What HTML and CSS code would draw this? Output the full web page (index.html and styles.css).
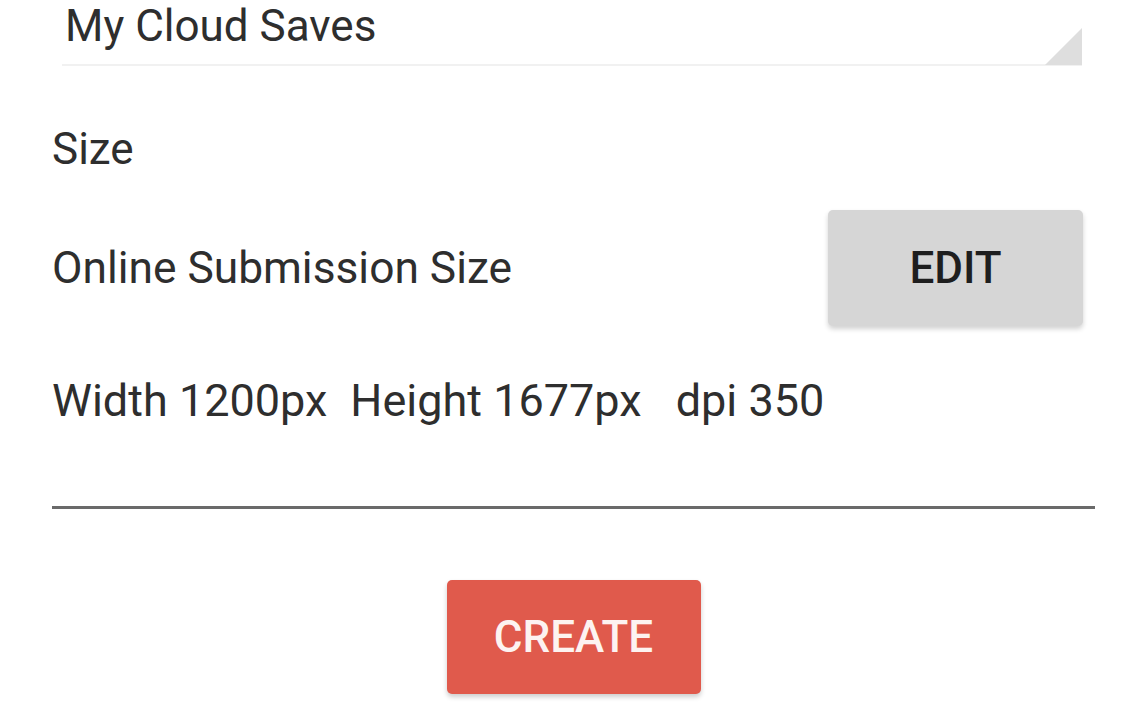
FILE: index.html
```html
<!DOCTYPE html>
<html>
<head>
<meta charset="utf-8">
<link rel="stylesheet" href="styles.css">
</head>
<body>
<div class="page">
  <div class="select">
    <span class="select-text">My Cloud Saves</span>
    <span class="select-arrow"></span>
  </div>
  <div class="label">Size</div>
  <div class="row">
    <span class="row-text">Online Submission Size</span>
    <button class="btn btn-edit">EDIT</button>
  </div>
  <div class="dims"><span class="dim dim-w">Width 1200px</span><span class="dim dim-h">Height 1677px</span><span class="dim">dpi 350</span></div>
  <div class="divider"></div>
  <div class="actions">
    <button class="btn btn-create">CREATE</button>
  </div>
</div>
</body>
</html>
```
FILE: styles.css
```css
html, body {
  margin: 0;
  padding: 0;
  background: #ffffff;
}
body {
  width: 1146px;
  height: 716px;
  overflow: hidden;
  font-family: Roboto, "Noto Sans", sans-serif;
  color: #2e2e2e;
}
.page {
  padding: 0 51px 0 52px;
}
.select {
  position: relative;
  margin: 0 13px 0 10px;
  height: 64px;
  border-bottom: 2px solid #f1f1f1;
  display: flex;
  align-items: flex-start;
}
.select-text {
  font-size: 44px;
  line-height: 52px;
  margin-left: 3px;
}
.select-arrow {
  position: absolute;
  right: 0;
  bottom: -1px;
  width: 0;
  height: 0;
  border-style: solid;
  border-width: 0 0 37px 37px;
  border-color: transparent transparent #dedede transparent;
}
.label {
  margin-top: 57px;
  font-size: 44px;
  line-height: 52px;
}
.row {
  margin-top: 35px;
  display: flex;
  align-items: center;
  justify-content: space-between;
  padding-right: 12px;
}
.row-text {
  font-size: 44.3px;
  line-height: 52px;
}
.btn {
  border: none;
  font-family: Roboto, "Noto Sans", sans-serif;
  font-weight: 500;
  font-size: 44px;
  border-radius: 5px;
  padding: 0;
}
.btn-edit {
  width: 255px;
  height: 116px;
  background: #d6d6d6;
  color: #1e1e1e;
  box-shadow: 0 3px 5px rgba(0,0,0,0.18);
}
.dims {
  margin-top: 49px;
  font-size: 45px;
  line-height: 52px;
  display: flex;
}
.dim-w {
  margin-right: 23px;
}
.dim-h {
  margin-right: 34px;
}
.divider {
  margin-top: 79px;
  height: 3px;
  background: #6a6a6a;
}
.actions {
  display: flex;
  justify-content: center;
  margin-top: 71px;
}
.btn-create {
  width: 254px;
  height: 114px;
  background: #e05a4c;
  color: #fdf3f1;
  box-shadow: 0 3px 5px rgba(0,0,0,0.2);
}
```
